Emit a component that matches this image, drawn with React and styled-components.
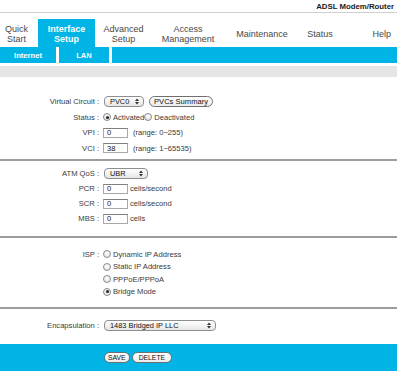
import React from 'react';
import styled, { createGlobalStyle } from 'styled-components';

const BLUE = '#00b5e6';

const GlobalStyle = createGlobalStyle`
  body {
    margin: 0;
    background: #ffffff;
    font-family: "Liberation Sans", Arial, Helvetica, sans-serif;
    color: #222;
  }
`;

const Page = styled.div`
  width: 397px;
`;

const TitleBar = styled.div`
  height: 12px;
  line-height: 13px;
  border-bottom: 1px solid #cfcfcf;
  text-align: right;
  padding-right: 3px;
  font-size: 7.8px;
  font-weight: bold;
  color: #1a1a1a;
`;

const Nav = styled.div`
  margin-top: 6px;
  height: 28px;
  display: grid;
  grid-template-columns: 38px 57px 57px 72px 76px 40px 1fr;
`;

const NavTab = styled.div`
  display: flex;
  align-items: center;
  justify-content: ${(p) => p.$align || 'center'};
  text-align: center;
  padding-top: 1px;
  padding-right: ${(p) => p.$pr || 0}px;
  font-size: 9px;
  line-height: 10px;
  color: ${(p) => (p.$active ? '#ffffff' : '#484848')};
  font-weight: ${(p) => (p.$active ? 'bold' : 'normal')};
  background: ${(p) => (p.$active ? BLUE : 'transparent')};
`;

const SubNav = styled.div`
  height: 16px;
  background: ${BLUE};
  display: flex;
`;

const SubTab = styled.div`
  width: ${(p) => p.$w}px;
  display: flex;
  align-items: center;
  justify-content: center;
  color: #ffffff;
  font-weight: bold;
  font-size: 7.6px;
  border-right: 3px solid #ffffff;
`;

const GrayBar = styled.div`
  margin-top: 3px;
  height: 11px;
  background: #e5e5e5;
`;

const Section = styled.div`
  padding-top: ${(p) => p.$pt}px;
  padding-bottom: ${(p) => p.$pb}px;
  border-bottom: ${(p) => (p.$last ? 'none' : '2px solid #9c9c9c')};
`;

const Row = styled.div`
  display: grid;
  grid-template-columns: 99px 1fr;
  column-gap: 4px;
  height: ${(p) => p.$h}px;
  align-items: center;
  font-size: 7.6px;
`;

const Label = styled.div`
  text-align: right;
  color: #3a3a3a;
`;

const Field = styled.div`
  display: flex;
  align-items: center;
  gap: ${(p) => p.$gap || 0}px;
  color: #3a3a3a;
`;

const SelectBox = styled.div`
  box-sizing: border-box;
  width: ${(p) => p.$w}px;
  height: 11px;
  margin-left: 1px;
  border: 1px solid #8e8e8e;
  border-radius: 4px;
  background: linear-gradient(#ffffff, #e6e6e6);
  display: flex;
  align-items: center;
  justify-content: space-between;
  padding: 0 4px 0 5px;
  font-size: 7.4px;
  color: #111;
`;

const PillButton = styled.button`
  box-sizing: border-box;
  height: 11px;
  padding: 0 ${(p) => p.$px || 4}px;
  border: 1px solid #6f6f6f;
  border-radius: 6px;
  background: linear-gradient(#ffffff, #ececec);
  font-family: inherit;
  font-size: ${(p) => p.$fs || 7.6}px;
  line-height: 9px;
  color: #111;
`;

const TextInput = styled.input`
  box-sizing: border-box;
  width: 25px;
  height: 10px;
  border: 1px solid #a8a8a8;
  border-top-color: #808080;
  padding: 0 3px;
  margin: 0;
  font-family: inherit;
  font-size: 7.6px;
  color: #111;
  outline: none;
`;

const Hint = styled.span`
  margin-left: ${(p) => p.$ml || 2}px;
`;

const RadioDot = styled.span`
  box-sizing: border-box;
  width: 8px;
  height: 8px;
  border-radius: 50%;
  border: 1px solid #8a8a8a;
  background: radial-gradient(circle at 50% 35%, #ffffff, #dcdcdc);
  display: inline-flex;
  align-items: center;
  justify-content: center;
  margin-right: 2px;

  &::after {
    content: '';
    width: 3px;
    height: 3px;
    border-radius: 50%;
    background: ${(p) => (p.$on ? '#222' : 'transparent')};
  }
`;

const RadioItem = styled.span`
  display: inline-flex;
  align-items: center;
`;

const Footer = styled.div`
  height: 27px;
  background: ${BLUE};
  display: flex;
  align-items: center;
  gap: 2px;
  padding-left: 104px;
`;

const Arrows = () => (
  <svg width="4" height="7" viewBox="0 0 4 7">
    <path d="M0 3 L2 0.5 L4 3 Z M0 4 L2 6.5 L4 4 Z" fill="#333" />
  </svg>
);

const Select = ({ w, children }) => (
  <SelectBox $w={w}>
    <span>{children}</span>
    <Arrows />
  </SelectBox>
);

const Radio = ({ on, children }) => (
  <RadioItem>
    <RadioDot $on={on} />
    {children}
  </RadioItem>
);

const App = () => (
  <Page>
    <GlobalStyle />
    <TitleBar>ADSL Modem/Router</TitleBar>
    <Nav>
      <NavTab $pr={5}>Quick<br />Start</NavTab>
      <NavTab $active>Interface<br />Setup</NavTab>
      <NavTab>Advanced<br />Setup</NavTab>
      <NavTab>Access<br />Management</NavTab>
      <NavTab>Maintenance</NavTab>
      <NavTab>Status</NavTab>
      <NavTab $align="flex-end" $pr={6}>Help</NavTab>
    </Nav>
    <SubNav>
      <SubTab $w={56}>Internet</SubTab>
      <SubTab $w={50}>LAN</SubTab>
    </SubNav>
    <GrayBar />

    <Section $pt={17} $pb={3}>
      <Row $h={15.5}>
        <Label>Virtual Circuit :</Label>
        <Field $gap={5}>
          <Select w={40}>PVC0</Select>
          <PillButton>PVCs Summary</PillButton>
        </Field>
      </Row>
      <Row $h={15.5}>
        <Label>Status :</Label>
        <Field>
          <Radio on>Activated</Radio>
          <Radio>Deactivated</Radio>
        </Field>
      </Row>
      <Row $h={15.5}>
        <Label>VPI :</Label>
        <Field>
          <TextInput defaultValue="0" />
          <Hint $ml={5}>(range: 0~255)</Hint>
        </Field>
      </Row>
      <Row $h={15.5}>
        <Label>VCI :</Label>
        <Field>
          <TextInput defaultValue="38" />
          <Hint $ml={5}>(range: 1~65535)</Hint>
        </Field>
      </Row>
    </Section>

    <Section $pt={5} $pb={10}>
      <Row $h={15}>
        <Label>ATM QoS :</Label>
        <Field>
          <Select w={44}>UBR</Select>
        </Field>
      </Row>
      <Row $h={15}>
        <Label>PCR :</Label>
        <Field>
          <TextInput defaultValue="0" />
          <Hint>cells/second</Hint>
        </Field>
      </Row>
      <Row $h={15}>
        <Label>SCR :</Label>
        <Field>
          <TextInput defaultValue="0" />
          <Hint>cells/second</Hint>
        </Field>
      </Row>
      <Row $h={15}>
        <Label>MBS :</Label>
        <Field>
          <TextInput defaultValue="0" />
          <Hint>cells</Hint>
        </Field>
      </Row>
    </Section>

    <Section $pt={10} $pb={9}>
      <Row $h={12.5}>
        <Label>ISP :</Label>
        <Field><Radio>Dynamic IP Address</Radio></Field>
      </Row>
      <Row $h={12.5}>
        <Label />
        <Field><Radio>Static IP Address</Radio></Field>
      </Row>
      <Row $h={12.5}>
        <Label />
        <Field><Radio>PPPoE/PPPoA</Radio></Field>
      </Row>
      <Row $h={12.5}>
        <Label />
        <Field><Radio on>Bridge Mode</Radio></Field>
      </Row>
    </Section>

    <Section $pt={9} $pb={11} $last>
      <Row $h={15}>
        <Label>Encapsulation :</Label>
        <Field>
          <Select w={112}>1483 Bridged IP LLC</Select>
        </Field>
      </Row>
    </Section>

    <Footer>
      <PillButton $fs={6.8} $px={3}>SAVE</PillButton>
      <PillButton $fs={6.8} $px={6}>DELETE</PillButton>
    </Footer>
  </Page>
);

export default App;
